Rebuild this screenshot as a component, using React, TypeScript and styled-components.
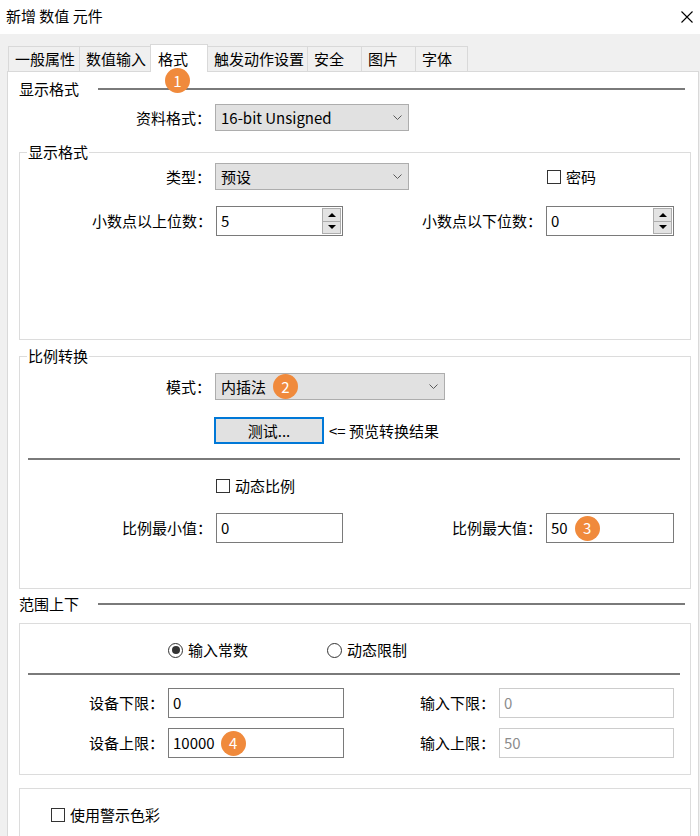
import styled, { createGlobalStyle } from "styled-components";

const GlobalStyle = createGlobalStyle`
  html, body {
    margin: 0;
    padding: 0;
  }
  body {
    width: 700px;
    height: 836px;
    overflow: hidden;
    background: #f0f0f0;
    font-family: "Noto Sans CJK SC", "Noto Sans", sans-serif;
    font-size: 15px;
    color: #000;
  }
`;

const tabs = [
  { name: "一般属性", w: 72 },
  { name: "数值输入", w: 72 },
  { name: "格式", w: 58, active: true },
  { name: "触发动作设置", w: 101 },
  { name: "安全", w: 55 },
  { name: "图片", w: 55 },
  { name: "字体", w: 53 },
];

const Chevron = () => (
  <svg width="9" height="5" viewBox="0 0 9 5">
    <polyline points="0.5,0.5 4.5,4.5 8.5,0.5" fill="none" stroke="#5a5a5a" strokeWidth="1" />
  </svg>
);

const CloseIcon = () => (
  <svg width="12" height="12" viewBox="0 0 12 12">
    <path d="M0.5 0.5 L11.5 11.5 M11.5 0.5 L0.5 11.5" stroke="#000" strokeWidth="1.1" />
  </svg>
);

const SpinBox = () => (
  <S.Spin>
    <S.SpinBtn>
      <S.Arrow $up />
    </S.SpinBtn>
    <S.SpinBtn>
      <S.Arrow />
    </S.SpinBtn>
  </S.Spin>
);

const App = () => {
  return (
    <>
      <GlobalStyle />
      <S.TitleBar>
        <S.Title>新增 数值 元件</S.Title>
        <CloseIcon />
      </S.TitleBar>

      <S.TabRow>
        {tabs.map((t) => (
          <S.Tab key={t.name} $w={t.w} $active={t.active}>
            {t.name}
            {t.active && <S.TabBadge>1</S.TabBadge>}
          </S.Tab>
        ))}
      </S.TabRow>

      <S.Panel>
        <S.SectionHeader>
          <span>显示格式</span>
          <S.HeaderRule />
        </S.SectionHeader>

        <S.FormRow $mt={5}>
          <S.FieldLabel $w={207}>资料格式：</S.FieldLabel>
          <S.Select $w={194}>
            <S.SelectText>16-bit Unsigned</S.SelectText>
            <Chevron />
          </S.Select>
        </S.FormRow>

        <S.Group $mt={11} $pb={103}>
          <S.Legend>显示格式</S.Legend>
          <S.FormRow $mt={1}>
            <S.FieldLabel $w={195}>类型：</S.FieldLabel>
            <S.Select $w={194}>
              <S.SelectText>预设</S.SelectText>
              <Chevron />
            </S.Select>
            <S.CheckItem $ml={138}>
              <S.CheckBox />
              密码
            </S.CheckItem>
          </S.FormRow>
          <S.FormRow $mt={16}>
            <S.FieldLabel $w={196}>小数点以上位数：</S.FieldLabel>
            <S.TextBox $w={127}>
              5
              <SpinBox />
            </S.TextBox>
            <S.FieldLabel $w={203}>小数点以下位数：</S.FieldLabel>
            <S.TextBox $w={128}>
              0
              <SpinBox />
            </S.TextBox>
          </S.FormRow>
        </S.Group>

        <S.Group $mt={6} $pb={45}>
          <S.Legend>比例转换</S.Legend>
          <S.FormRow $mt={7}>
            <S.FieldLabel $w={195}>模式：</S.FieldLabel>
            <S.Select $w={230}>
              <S.SelectText>
                内插法
                <S.Badge $ml={7}>2</S.Badge>
              </S.SelectText>
              <Chevron />
            </S.Select>
          </S.FormRow>
          <S.FormRow $mt={17} $pl={194}>
            <S.Button>测试...</S.Button>
            <S.Hint>&lt;= 预览转换结果</S.Hint>
          </S.FormRow>
          <S.Separator $mt={14} />
          <S.FormRow $mt={16} $pl={196}>
            <S.CheckItem>
              <S.CheckBox />
              动态比例
            </S.CheckItem>
          </S.FormRow>
          <S.FormRow $mt={17}>
            <S.FieldLabel $w={196}>比例最小值：</S.FieldLabel>
            <S.TextBox $w={127}>0</S.TextBox>
            <S.FieldLabel $w={203}>比例最大值：</S.FieldLabel>
            <S.TextBox $w={128}>
              50
              <S.Badge $ml={7}>3</S.Badge>
            </S.TextBox>
          </S.FormRow>
        </S.Group>

        <S.SectionHeader $mt={5}>
          <span>范围上下</span>
          <S.HeaderRule />
        </S.SectionHeader>

        <S.Box $mt={9} $pt={16} $pb={16}>
          <S.FormRow $pl={148}>
            <S.RadioItem>
              <S.Radio $checked />
              输入常数
            </S.RadioItem>
            <S.RadioItem $ml={79}>
              <S.Radio />
              动态限制
            </S.RadioItem>
          </S.FormRow>
          <S.Separator $mt={13} />
          <S.FormRow $mt={13}>
            <S.FieldLabel $w={148}>设备下限：</S.FieldLabel>
            <S.TextBox $w={176}>0</S.TextBox>
            <S.FieldLabel $w={155}>输入下限：</S.FieldLabel>
            <S.TextBox $w={175} $disabled>
              0
            </S.TextBox>
          </S.FormRow>
          <S.FormRow $mt={10}>
            <S.FieldLabel $w={148}>设备上限：</S.FieldLabel>
            <S.TextBox $w={176}>
              10000
              <S.Badge $ml={6}>4</S.Badge>
            </S.TextBox>
            <S.FieldLabel $w={155}>输入上限：</S.FieldLabel>
            <S.TextBox $w={175} $disabled>
              50
            </S.TextBox>
          </S.FormRow>
        </S.Box>

        <S.Box $mt={13} $pt={16} $pb={40}>
          <S.FormRow $pl={31}>
            <S.CheckItem>
              <S.CheckBox />
              使用警示色彩
            </S.CheckItem>
          </S.FormRow>
        </S.Box>
      </S.Panel>
    </>
  );
};

const S = {
  TitleBar: styled.div`
    height: 34px;
    background: #fff;
    display: flex;
    align-items: center;
    justify-content: space-between;
    padding: 0 7px 0 6px;
    box-sizing: border-box;
  `,

  Title: styled.span`
    font-size: 15px;
    line-height: 20px;
    margin-top: -2px;
  `,

  TabRow: styled.div`
    display: flex;
    align-items: flex-end;
    padding: 10px 0 0 8px;
    height: 37px;
    box-sizing: border-box;
  `,

  Tab: styled.div<{ $w: number; $active?: boolean }>`
    position: relative;
    z-index: ${(p) => (p.$active ? 2 : 1)};
    box-sizing: border-box;
    width: ${(p) => p.$w}px;
    height: ${(p) => (p.$active ? 28 : 25)}px;
    margin-bottom: ${(p) => (p.$active ? -1 : 0)}px;
    margin-left: -1px;
    padding-left: ${(p) => (p.$active ? 7 : 6)}px;
    display: flex;
    align-items: center;
    border: 1px solid #d9d9d9;
    border-bottom: none;
    background: ${(p) => (p.$active ? "#fff" : "#f0f0f0")};
    line-height: 20px;
    white-space: nowrap;

    &:first-child {
      margin-left: 0;
    }
  `,

  TabBadge: styled.span`
    position: absolute;
    left: 14px;
    top: 23px;
    width: 25px;
    height: 25px;
    border-radius: 50%;
    background: #f08a3c;
    color: #fff;
    font-size: 15px;
    display: flex;
    align-items: center;
    justify-content: center;
  `,

  Panel: styled.div`
    margin: 0 1px 0 7px;
    height: 800px;
    background: #fff;
    border: 1px solid #d9d9d9;
    box-sizing: border-box;
    padding-top: 7px;
  `,

  SectionHeader: styled.div<{ $mt?: number }>`
    display: flex;
    align-items: center;
    height: 20px;
    line-height: 20px;
    margin: ${(p) => p.$mt ?? 0}px 13px 0 11px;
  `,

  HeaderRule: styled.div`
    flex: 1;
    height: 2px;
    margin-left: 19px;
    background: #7a7a7a;
  `,

  FormRow: styled.div<{ $mt?: number; $pl?: number }>`
    display: flex;
    align-items: center;
    margin-top: ${(p) => p.$mt ?? 0}px;
    padding-left: ${(p) => p.$pl ?? 0}px;
    line-height: 20px;
  `,

  FieldLabel: styled.span<{ $w: number }>`
    width: ${(p) => p.$w}px;
    flex-shrink: 0;
    box-sizing: border-box;
    padding-right: 4px;
    text-align: right;
    white-space: nowrap;
  `,

  Select: styled.div<{ $w: number }>`
    width: ${(p) => p.$w}px;
    height: 27px;
    box-sizing: border-box;
    flex-shrink: 0;
    border: 1px solid #adadad;
    background: #e1e1e1;
    display: flex;
    align-items: center;
    padding: 0 6px 0 5px;
  `,

  SelectText: styled.span`
    flex: 1;
    display: flex;
    align-items: center;
    white-space: nowrap;
  `,

  TextBox: styled.div<{ $w: number; $disabled?: boolean }>`
    width: ${(p) => p.$w}px;
    height: 30px;
    box-sizing: border-box;
    flex-shrink: 0;
    border: 1px solid ${(p) => (p.$disabled ? "#cccccc" : "#7a7a7a")};
    color: ${(p) => (p.$disabled ? "#8c8c8c" : "#000")};
    background: #fff;
    display: flex;
    align-items: center;
    padding-left: 4px;
  `,

  Spin: styled.div`
    margin-left: auto;
    margin-right: 1px;
    width: 19px;
    height: 26px;
    display: flex;
    flex-direction: column;
  `,

  SpinBtn: styled.div`
    flex: 1;
    box-sizing: border-box;
    border: 1px solid #adadad;
    background: #e3e3e3;
    display: flex;
    align-items: center;
    justify-content: center;

    & + & {
      margin-top: -1px;
    }
  `,

  Arrow: styled.span<{ $up?: boolean }>`
    width: 0;
    height: 0;
    border-left: 4px solid transparent;
    border-right: 4px solid transparent;
    ${(p) => (p.$up ? "border-bottom: 4px solid #000;" : "border-top: 4px solid #000;")}
  `,

  Badge: styled.span<{ $ml?: number }>`
    margin-left: ${(p) => p.$ml ?? 0}px;
    width: 25px;
    height: 25px;
    flex-shrink: 0;
    border-radius: 50%;
    background: #f08a3c;
    color: #fff;
    font-size: 15px;
    display: inline-flex;
    align-items: center;
    justify-content: center;
  `,

  Group: styled.fieldset<{ $mt: number; $pb: number }>`
    margin: ${(p) => p.$mt}px 7px 0 11px;
    padding: 0 0 ${(p) => p.$pb}px 0;
    border: 1px solid #dcdcdc;
    min-width: 0;
  `,

  Legend: styled.legend`
    margin-left: 7px;
    padding: 0 1px;
    line-height: 20px;
    font-size: 15px;
  `,

  Box: styled.div<{ $mt: number; $pt: number; $pb: number }>`
    margin: ${(p) => p.$mt}px 7px 0 11px;
    padding: ${(p) => p.$pt}px 0 ${(p) => p.$pb}px 0;
    border: 1px solid #dcdcdc;
  `,

  Button: styled.div`
    width: 110px;
    height: 27px;
    box-sizing: border-box;
    border: 2px solid #0078d7;
    background: #e1e1e1;
    display: flex;
    align-items: center;
    justify-content: center;
  `,

  Hint: styled.span`
    margin-left: 5px;
  `,

  Separator: styled.div<{ $mt: number }>`
    height: 2px;
    margin: ${(p) => p.$mt}px 10px 0 8px;
    background: #7a7a7a;
  `,

  CheckItem: styled.label<{ $ml?: number }>`
    display: inline-flex;
    align-items: center;
    gap: 5px;
    margin-left: ${(p) => p.$ml ?? 0}px;
    line-height: 20px;
  `,

  CheckBox: styled.span`
    width: 14px;
    height: 14px;
    box-sizing: border-box;
    border: 1px solid #333;
    background: #fff;
    flex-shrink: 0;
  `,

  RadioItem: styled.label<{ $ml?: number }>`
    display: inline-flex;
    align-items: center;
    gap: 5px;
    margin-left: ${(p) => p.$ml ?? 0}px;
    line-height: 20px;
  `,

  Radio: styled.span<{ $checked?: boolean }>`
    width: 15px;
    height: 15px;
    box-sizing: border-box;
    border: 1px solid #333;
    border-radius: 50%;
    background: #fff;
    flex-shrink: 0;
    display: flex;
    align-items: center;
    justify-content: center;

    &::after {
      content: "";
      display: ${(p) => (p.$checked ? "block" : "none")};
      width: 8px;
      height: 8px;
      border-radius: 50%;
      background: #333;
    }
  `,
};

export default App;
